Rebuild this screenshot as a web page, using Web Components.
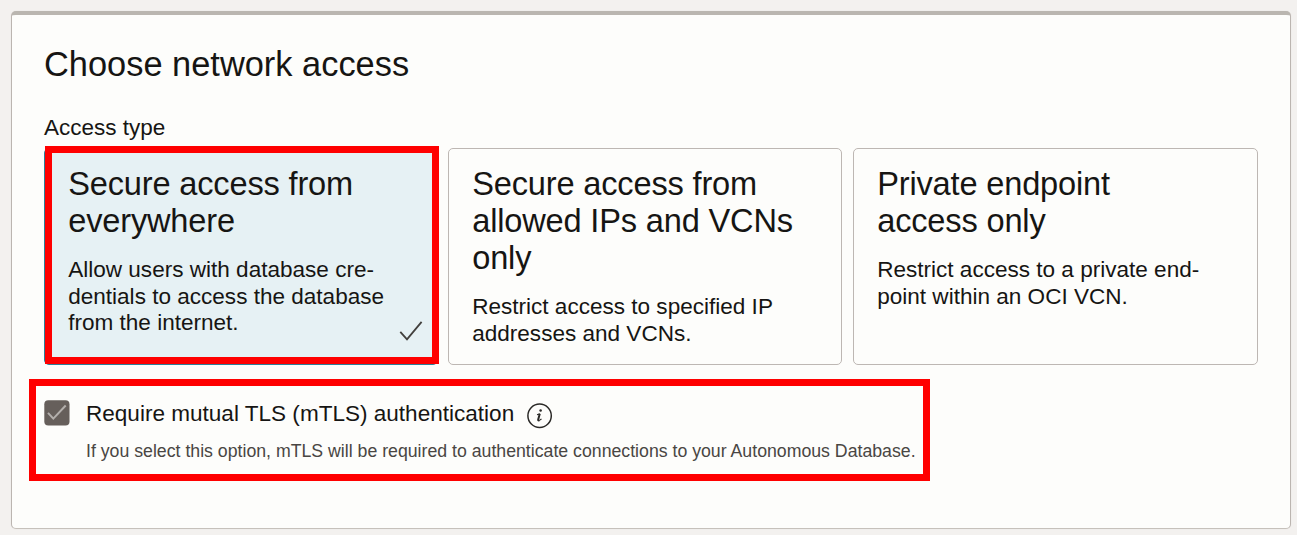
<!DOCTYPE html>
<html lang="en">
<head>
<meta charset="utf-8">
<title>Choose network access</title>
<style>
html,body{margin:0;height:100%;overflow:hidden}
body{background:#f3f1ef;font-family:"Liberation Sans",Arial,sans-serif;color:#161513;padding:11px 6px 6px 11px;box-sizing:border-box}
</style>
</head>
<body>
<network-panel>
  <span slot="title">Choose network access</span>
  <span slot="label">Access type</span>
  <access-card selected><span slot="title">Secure access from<br>everywhere</span>Allow users with database cre-<br>dentials to access the database<br>from the internet.</access-card>
  <access-card><span slot="title">Secure access from<br>allowed IPs and VCNs<br>only</span>Restrict access to specified IP<br>addresses and VCNs.</access-card>
  <access-card><span slot="title">Private endpoint<br>access only</span>Restrict access to a private end-<br>point within an OCI VCN.</access-card>
  <check-option slot="option">Require mutual TLS (mTLS) authentication<span slot="help">If you select this option, mTLS will be required to authenticate connections to your Autonomous Database.</span></check-option>
</network-panel>
<script>
class Base extends HTMLElement {
  constructor() {
    super();
    this.attachShadow({mode: "open"}).innerHTML = this.constructor.markup;
  }
}

class NetworkPanel extends Base {
  static markup = `<style>
    :host{display:block;box-sizing:border-box;height:518px;background:#fdfdfb;border:1px solid #bbb5b0;border-top:4px solid #bab6b0;border-bottom-color:#c6c1bb;border-radius:5px;padding:29px 32px 0;box-shadow:0 0 1px #d8d4d0}
    h1{margin:0 0 31px;font-weight:400;font-size:34.4px;line-height:40px;white-space:nowrap}
    .label{font-size:22.5px;line-height:26px;margin-bottom:7px}
    .cards{display:grid;grid-template-columns:394px 394px 405px;column-gap:10px;height:217px}
    .cards ::slotted(access-card:nth-of-type(3)){margin-left:1px;margin-right:-1px}
    .option{margin-top:35px}
  </style>
  <h1><slot name="title"></slot></h1>
  <div class="label"><slot name="label"></slot></div>
  <div class="cards"><slot></slot></div>
  <div class="option"><slot name="option"></slot></div>`;
}
customElements.define("network-panel", NetworkPanel);

class AccessCard extends Base {
  static markup = `<style>
    :host{display:block;position:relative;box-sizing:border-box;border:1px solid #bdb7b3;border-radius:5px;padding:16px 0 0 23.2px;white-space:nowrap}
    :host([selected]){background:#e6f1f4;border-color:#2c7f99}
    h2{margin:0 0 18px;font-weight:400;font-size:32.6px;letter-spacing:-.17px;line-height:37px}
    p{margin:0;font-size:22.55px;line-height:26.6px}
    svg,.mark{display:none;position:absolute}
    :host([selected]) svg,:host([selected]) .mark{display:block}
    svg{right:14px;bottom:21px}
    .mark{inset:-3px -2px 0 0;border:7px solid #f00}
  </style>
  <h2><slot name="title"></slot></h2>
  <p><slot></slot></p>
  <svg width="24" height="24" viewBox="0 0 24 24" fill="none" stroke="#42403d" stroke-width="1.8"><path d="M1.3 12.8 L8 20.3 L22.6 2.8"/></svg>
  <div class="mark"></div>`;
}
customElements.define("access-card", AccessCard);

class CheckOption extends Base {
  static markup = `<style>
    :host{display:grid;position:relative;grid-template-columns:26px auto;column-gap:16px;white-space:nowrap}
    .row{display:flex;align-items:flex-start;font-size:22.55px;line-height:26px;padding-top:1px}
    .box{margin-top:-.2px;display:block}
    .info{margin:2px 0 0 12.4px;flex:none}
    .help{grid-column:2;margin-top:11px;font-size:17.72px;line-height:22px;color:#494643}
    .mark{position:absolute;left:-15px;top:-21px;width:887px;height:88px;border:7px solid #f00}
  </style>
  <svg class="box" width="26" height="26" viewBox="0 0 26 26"><rect x=".3" y=".3" width="25.2" height="25.2" rx="4" fill="#665f5b"/><path d="M4 12.8 L9.3 18.6 L21.7 5.5" fill="none" stroke="#b3afac" stroke-width="2"/></svg>
  <div class="row"><span><slot></slot></span>
    <svg class="info" width="26" height="26" viewBox="0 0 26 26" fill="none" stroke="#2a2927"><circle cx="12.6" cy="12.7" r="11.7" stroke-width="1.5"/><path d="M10 11.7 L12.8 10.9" stroke-width="1.1"/><path d="M12.8 10.8 L11.2 16.4 Q10.9 17.9 12.2 17.4" stroke-width="2"/><path d="M11.9 17.6 L14.5 16" stroke-width="1.1"/><circle cx="13.6" cy="7.5" r="1.25" fill="#2a2927" stroke="none"/></svg>
  </div>
  <div class="help"><slot name="help"></slot></div>
  <div class="mark"></div>`;
}
customElements.define("check-option", CheckOption);
</script>
</body>
</html>
